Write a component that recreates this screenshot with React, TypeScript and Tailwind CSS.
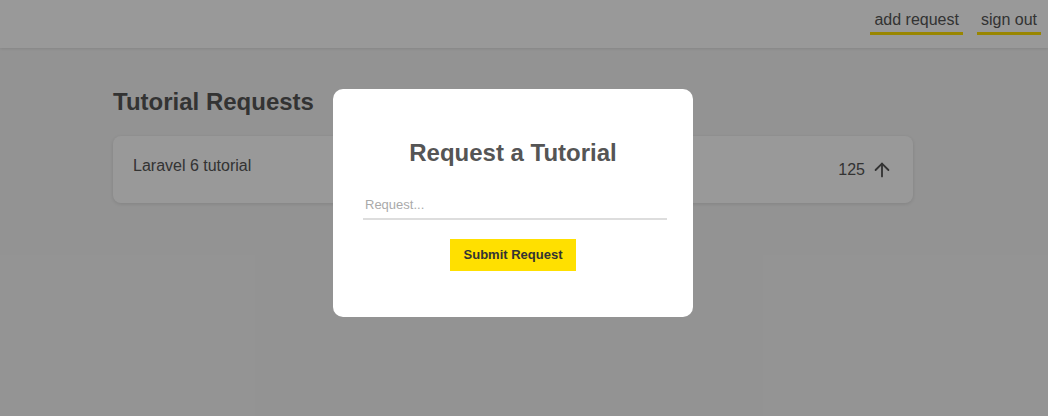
import { ArrowUp } from "lucide-react"

export default function App() {
  return (
    <div className="relative min-h-[416px] bg-[#f6f6f6] font-['Liberation_Sans',Arial,sans-serif] text-[#555]">
      <nav className="flex h-12 items-center justify-end bg-white shadow-[0_1px_3px_rgba(0,0,0,0.1)]">
        <a className="mx-[7px] mb-[2px] border-b-[3px] border-[#ffe000] px-1 pb-[3px] text-[16px] leading-[18px] text-[#555]">
          add request
        </a>
        <a className="mx-[7px] mb-[2px] border-b-[3px] border-[#ffe000] px-1 pb-[3px] text-[16px] leading-[18px] text-[#555]">
          sign out
        </a>
      </nav>

      <main className="ml-[113px] w-[800px] pt-[40px]">
        <h1 className="mb-[20px] text-[24px] font-bold leading-[28px] text-[#555]">
          Tutorial Requests
        </h1>
        <ul>
          <li className="flex h-[67px] justify-between rounded-lg bg-white px-5 shadow-[0_1px_4px_rgba(0,0,0,0.12)]">
            <span className="pt-[21px] text-[16px] leading-[18px]">Laravel 6 tutorial</span>
            <span className="flex items-center gap-[6px] pt-[1px] text-[16px]">
              125
              <ArrowUp size={22} strokeWidth={2} />
            </span>
          </li>
        </ul>
      </main>

      <div className="absolute inset-0 bg-black/40">
        <div className="ml-[333px] mt-[89px] w-[360px] rounded-[10px] bg-white pb-[46px] pl-[30px] pt-[50px] text-center">
          <h2 className="-ml-[30px] text-[24px] font-bold leading-[28px] text-[#555]">Request a Tutorial</h2>
          <input
            className="mt-[23px] block h-[30px] w-[304px] border-b-2 border-[#ddd] px-[2px] text-[13px] text-[#555] outline-none placeholder:text-[#aaa]"
            placeholder="Request..."
          />
          <div className="-ml-[30px]">
            <button className="mt-[19px] h-[32px] bg-[#ffe000] px-[14px] text-[13px] font-bold text-[#333]">
              Submit Request
            </button>
          </div>
        </div>
      </div>
    </div>
  )
}
